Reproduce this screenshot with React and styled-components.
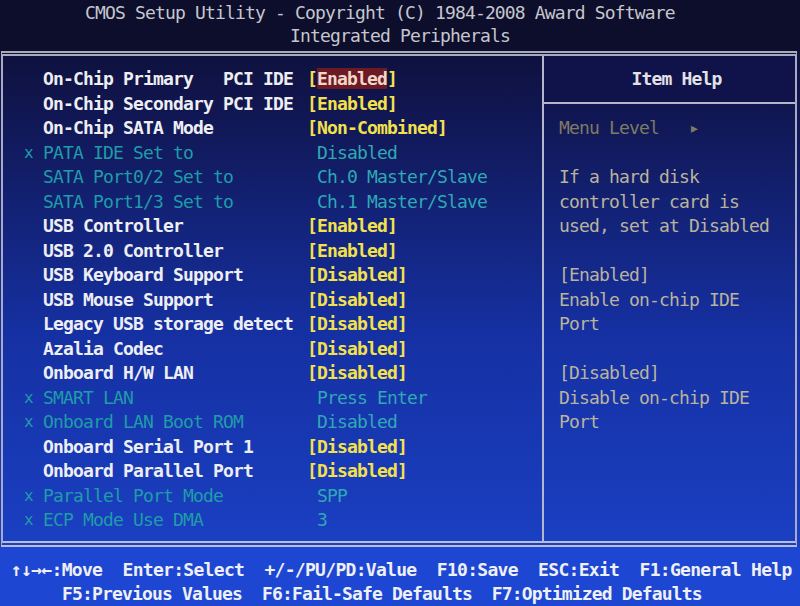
import styled, { createGlobalStyle, css } from "styled-components";

// Award BIOS - Integrated Peripherals

const GlobalStyle = createGlobalStyle`
  html, body {
    margin: 0;
    padding: 0;
    background: #0c0e2c;
  }
  body {
    font-family: "DejaVu Sans Mono", "Liberation Mono", monospace;
  }
`;

const Screen = styled.div`
  width: 800px;
  height: 606px;
  display: flex;
  flex-direction: column;
  overflow: hidden;
  background: linear-gradient(180deg, #0c0e2c 0%, #10144a 15%, #1530a2 55%, #1c44cc 100%);
  font-size: 18px;
  letter-spacing: -0.84px;
  white-space: pre;
`;

const Header = styled.header`
  height: 53px;
  padding-top: 1px;
  box-sizing: border-box;
  background: #0c0e2c;
  color: #c6c6cc;
  line-height: 23px;
`;

const TitleLine = styled.div`
  padding-left: ${(p) => p.$indent || 0}px;
  text-align: ${(p) => (p.$center ? "center" : "left")};
`;

const Frame = styled.main`
  flex: 0 0 auto;
  height: 496px;
  box-sizing: border-box;
  margin: 0 3px 0 1px;
  border-top: 5px double #a9abbd;
  border-bottom: 6px double #b9bdd6;
  border-left: 2px solid #a9abc4;
  border-right: 2px solid #a9abc4;
  display: grid;
  grid-template-columns: 541px 1fr;
`;

const SetupList = styled.section`
  padding: 11px 0 0 21px;
  border-right: 2px solid #b4b6cc;
`;

const Row = styled.div`
  display: grid;
  grid-template-columns: 19px 264px auto;
  height: 24.5px;
  line-height: 24.5px;
  font-weight: ${(p) => (p.$locked ? "normal" : "bold")};
  color: ${(p) => (p.$locked ? "#1f9ca8" : "#eeeef2")};
`;

const Mark = styled.span`
  color: #1f9ca8;
  font-weight: normal;
  font-size: 16px;
`;

const Value = styled.span`
  color: ${(p) => (p.$locked ? "#2fa9b3" : "#f4e04c")};
  padding-left: ${(p) => (p.$locked ? 10 : 0)}px;
`;

const Picked = styled.span`
  ${(p) =>
    p.$on &&
    css`
      background: #6c1a24;
      color: #f2d6c8;
    `}
`;

const HelpPanel = styled.aside`
  display: flex;
  flex-direction: column;
`;

const HelpTitle = styled.div`
  height: 48px;
  padding: 11px 0 0 14px;
  box-sizing: border-box;
  line-height: 24.5px;
  text-align: center;
  color: #e2e2e6;
  font-weight: bold;
  background: #10134a;
  border-bottom: 2px solid #b4b6cc;
`;

const HelpBody = styled.div`
  padding: 12px 0 0 15px;
  color: #bab39c;
`;

const HelpLine = styled.div`
  height: 24.5px;
  line-height: 24.5px;
  color: ${(p) => (p.$dim ? "#7f7b63" : "inherit")};
`;

const Footer = styled.footer`
  flex: 1;
  padding-top: 11px;
  background: #1d47d2;
  color: #eef0f6;
  font-weight: bold;
  line-height: 24px;
`;

const KeyLine = styled.div`
  padding-left: ${(p) => p.$indent}px;
  letter-spacing: ${(p) => p.$spacing || "-0.84px"};
`;

const items = [
  { label: "On-Chip Primary   PCI IDE", value: "Enabled", selected: true },
  { label: "On-Chip Secondary PCI IDE", value: "Enabled" },
  { label: "On-Chip SATA Mode", value: "Non-Combined" },
  { label: "PATA IDE Set to", value: "Disabled", locked: true, mark: true },
  { label: "SATA Port0/2 Set to", value: "Ch.0 Master/Slave", locked: true },
  { label: "SATA Port1/3 Set to", value: "Ch.1 Master/Slave", locked: true },
  { label: "USB Controller", value: "Enabled" },
  { label: "USB 2.0 Controller", value: "Enabled" },
  { label: "USB Keyboard Support", value: "Disabled" },
  { label: "USB Mouse Support", value: "Disabled" },
  { label: "Legacy USB storage detect", value: "Disabled" },
  { label: "Azalia Codec", value: "Disabled" },
  { label: "Onboard H/W LAN", value: "Disabled" },
  { label: "SMART LAN", value: "Press Enter", locked: true, mark: true },
  { label: "Onboard LAN Boot ROM", value: "Disabled", locked: true, mark: true },
  { label: "Onboard Serial Port 1", value: "Disabled" },
  { label: "Onboard Parallel Port", value: "Disabled" },
  { label: "Parallel Port Mode", value: "SPP", locked: true, mark: true },
  { label: "ECP Mode Use DMA", value: "3", locked: true, mark: true },
];

const helpLines = [
  { text: "Menu Level   ▸", dim: true },
  { text: "" },
  { text: "If a hard disk" },
  { text: "controller card is" },
  { text: "used, set at Disabled" },
  { text: "" },
  { text: "[Enabled]" },
  { text: "Enable on-chip IDE" },
  { text: "Port" },
  { text: "" },
  { text: "[Disabled]" },
  { text: "Disable on-chip IDE" },
  { text: "Port" },
];

export default function App() {
  return (
    <>
      <GlobalStyle />
      <Screen>
        <Header>
          <TitleLine $indent={85}>
            CMOS Setup Utility - Copyright (C) 1984-2008 Award Software
          </TitleLine>
          <TitleLine $center>Integrated Peripherals</TitleLine>
        </Header>

        <Frame>
          <SetupList>
            {items.map((it) => (
              <Row key={it.label} $locked={it.locked}>
                <Mark>{it.mark ? "x" : ""}</Mark>
                <span>{it.label}</span>
                <Value $locked={it.locked}>
                  {it.locked ? (
                    it.value
                  ) : (
                    <>
                      [<Picked $on={it.selected}>{it.value}</Picked>]
                    </>
                  )}
                </Value>
              </Row>
            ))}
          </SetupList>

          <HelpPanel>
            <HelpTitle>Item Help</HelpTitle>
            <HelpBody>
              {helpLines.map((l, i) => (
                <HelpLine key={i} $dim={l.dim}>
                  {l.text}
                </HelpLine>
              ))}
            </HelpBody>
          </HelpPanel>
        </Frame>

        <Footer>
          <KeyLine $indent={11} $spacing="-0.7px">
            ↑↓→←:Move  Enter:Select  +/-/PU/PD:Value  F10:Save  ESC:Exit  F1:General Help
          </KeyLine>
          <KeyLine $indent={62}>
            F5:Previous Values  F6:Fail-Safe Defaults  F7:Optimized Defaults
          </KeyLine>
        </Footer>
      </Screen>
    </>
  );
}
